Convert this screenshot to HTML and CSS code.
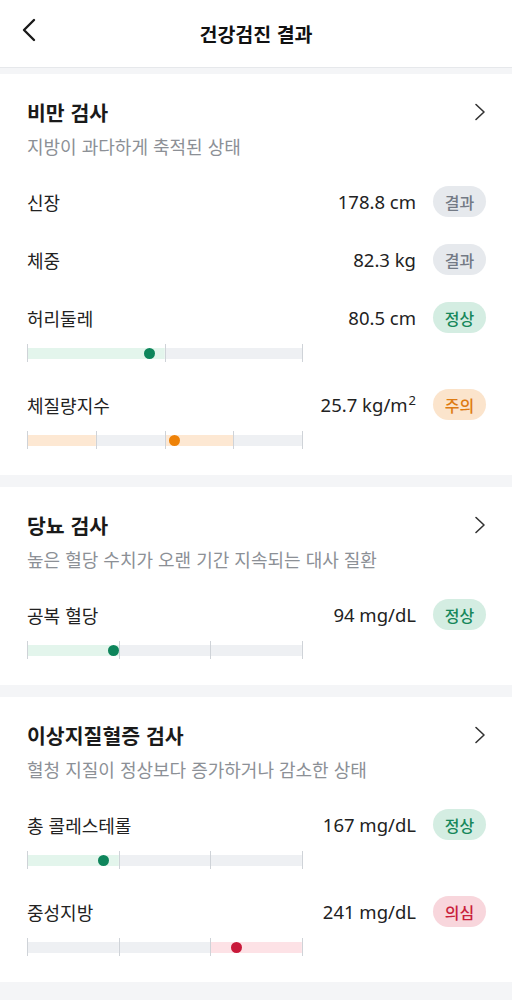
FILE: index.html
```html
<!DOCTYPE html>
<html lang="ko">
<head>
<meta charset="utf-8">
<title>건강검진 결과</title>
<link rel="stylesheet" href="styles.css">
</head>
<body>
<header class="topbar">
    <svg class="back" width="16" height="24" viewBox="0 0 16 24"><path d="M13 2 L3 12 L13 22" fill="none" stroke="#1a1a1a" stroke-width="2.4" stroke-linecap="round" stroke-linejoin="round"/></svg>
    <h1>건강검진 결과</h1>
</header>

<main class="page">
    <!-- 비만 -->
    <section class="card">
        <div class="card-head">
            <div>
                <h2>비만 검사</h2>
                <p>지방이 과다하게 축적된 상태</p>
            </div>
            <svg class="more" width="12" height="18" viewBox="0 0 12 18"><path d="M2 1.5 L10 9 L2 16.5" fill="none" stroke="#333" stroke-width="1.6" stroke-linecap="round" stroke-linejoin="round"/></svg>
        </div>
        <ul class="items">
            <li class="item">
                <div class="row"><span class="label">신장</span><span class="value">178.8 cm</span><span class="badge gray">결과</span></div>
            </li>
            <li class="item">
                <div class="row"><span class="label">체중</span><span class="value">82.3 kg</span><span class="badge gray">결과</span></div>
            </li>
            <li class="item">
                <div class="row"><span class="label">허리둘레</span><span class="value">80.5 cm</span><span class="badge ok">정상</span></div>
                <div class="gauge">
                    <span class="seg ok"></span><span class="seg"></span>
                    <span class="dot ok" style="left: 44.2%"></span>
                </div>
            </li>
            <li class="item">
                <div class="row"><span class="label">체질량지수</span><span class="value">25.7 kg/m<sup>2</sup></span><span class="badge warn">주의</span></div>
                <div class="gauge">
                    <span class="seg warn"></span><span class="seg"></span><span class="seg warn"></span><span class="seg"></span>
                    <span class="dot warn" style="left: 53.6%"></span>
                </div>
            </li>
        </ul>
    </section>

    <!-- 당뇨 -->
    <section class="card">
        <div class="card-head">
            <div>
                <h2>당뇨 검사</h2>
                <p>높은 혈당 수치가 오랜 기간 지속되는 대사 질환</p>
            </div>
            <svg class="more" width="12" height="18" viewBox="0 0 12 18"><path d="M2 1.5 L10 9 L2 16.5" fill="none" stroke="#333" stroke-width="1.6" stroke-linecap="round" stroke-linejoin="round"/></svg>
        </div>
        <ul class="items">
            <li class="item">
                <div class="row"><span class="label">공복 혈당</span><span class="value">94 mg/dL</span><span class="badge ok">정상</span></div>
                <div class="gauge">
                    <span class="seg ok"></span><span class="seg"></span><span class="seg"></span>
                    <span class="dot ok" style="left: 31.4%"></span>
                </div>
            </li>
        </ul>
    </section>

    <!-- 이상지질혈증 -->
    <section class="card">
        <div class="card-head">
            <div>
                <h2>이상지질혈증 검사</h2>
                <p>혈청 지질이 정상보다 증가하거나 감소한 상태</p>
            </div>
            <svg class="more" width="12" height="18" viewBox="0 0 12 18"><path d="M2 1.5 L10 9 L2 16.5" fill="none" stroke="#333" stroke-width="1.6" stroke-linecap="round" stroke-linejoin="round"/></svg>
        </div>
        <ul class="items">
            <li class="item">
                <div class="row"><span class="label">총 콜레스테롤</span><span class="value">167 mg/dL</span><span class="badge ok">정상</span></div>
                <div class="gauge">
                    <span class="seg ok"></span><span class="seg"></span><span class="seg"></span>
                    <span class="dot ok" style="left: 27.7%"></span>
                </div>
            </li>
            <li class="item">
                <div class="row"><span class="label">중성지방</span><span class="value">241 mg/dL</span><span class="badge bad">의심</span></div>
                <div class="gauge">
                    <span class="seg"></span><span class="seg"></span><span class="seg bad"></span>
                    <span class="dot bad" style="left: 75.9%"></span>
                </div>
            </li>
        </ul>
    </section>
</main>
</body>
</html>
```

FILE: styles.css
```css
/* 기본 */
body {
    margin: 0;
    background: #f4f5f7;
    color: #1f1f1f;
    font-family: "Noto Sans CJK KR", sans-serif;
}

ul {
    list-style: none;
    margin: 0;
    padding: 0;
}

/* 상단 바 */
.topbar {
    position: relative;
    height: 67px;
    background: #fff;
    border-bottom: 1px solid #e6e8eb;
    display: flex;
    align-items: center;
    justify-content: center;
}

.topbar .back {
    position: absolute;
    left: 21px;
    top: 18px;
}

.topbar h1 {
    margin: 0;
    font-size: 19.5px;
    font-weight: 700;
    color: #111;
}

/* 카드 */
.page {
    display: flex;
    flex-direction: column;
    gap: 12px;
    padding-top: 6px;
}

.card {
    background: #fff;
    padding: 23px 26px 26px 27px;
}

.card-head {
    display: flex;
    justify-content: space-between;
    align-items: flex-start;
}

.card-head h2 {
    margin: 0;
    font-size: 20.5px;
    line-height: 30px;
    font-weight: 700;
    color: #1a1a1a;
}

.card-head p {
    margin: 7px 0 0;
    font-size: 18px;
    line-height: 24px;
    color: #8c9096;
}

.card-head .more {
    margin-top: 6px;
}

.items {
    display: flex;
    flex-direction: column;
    gap: 27px;
    margin-top: 28px;
}

/* 항목 행 */
.row {
    display: flex;
    align-items: center;
    height: 31px;
}

.label {
    flex: 1;
    font-size: 18px;
    color: #222;
}

.value {
    font-family: "Noto Sans", "Noto Sans CJK KR", sans-serif;
    font-size: 18.5px;
    color: #222;
    margin-right: 17px;
}

.value sup {
    font-size: 13px;
    vertical-align: 7px;
    line-height: 0;
    margin-left: 1px;
}

.badge {
    width: 53px;
    height: 31px;
    border-radius: 16px;
    display: flex;
    align-items: center;
    justify-content: center;
    font-size: 16px;
    font-weight: 500;
}

.badge.gray { background: #e6e9ed; color: #737a85; }
.badge.ok   { background: #d4ede2; color: #16875a; }
.badge.warn { background: #fbe4cc; color: #de7b12; }
.badge.bad  { background: #f8d6dc; color: #c91f3b; }

/* 게이지 바 */
.gauge {
    position: relative;
    display: flex;
    width: 275px;
    height: 18px;
    margin-top: 11px;
    border-right: 1px solid #cfd3d8;
}

.seg {
    flex: 1;
    border-left: 1px solid #cfd3d8;
    background: linear-gradient(#eef0f3, #eef0f3) center / 100% 11px no-repeat;
}

.seg.ok   { background-image: linear-gradient(#e3f5ec, #e3f5ec); }
.seg.warn { background-image: linear-gradient(#fde8d3, #fde8d3); }
.seg.bad  { background-image: linear-gradient(#fde2e6, #fde2e6); }

.dot {
    position: absolute;
    top: 4px;
    width: 11px;
    height: 11px;
    margin-left: -5px;
    border-radius: 50%;
}

.dot.ok   { background: #0e855b; }
.dot.warn { background: #ee8208; }
.dot.bad  { background: #c8193a; }
```
